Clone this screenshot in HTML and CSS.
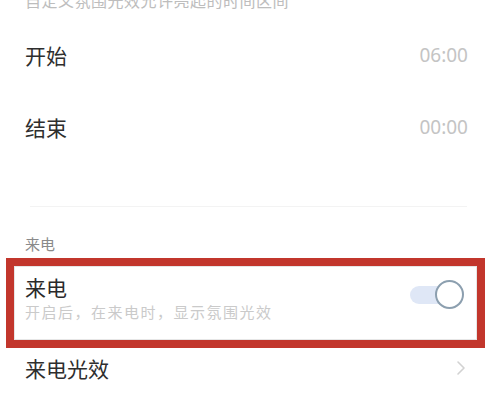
FILE: index.html
```html
<!DOCTYPE html>
<html lang="zh-CN">
<head>
<meta charset="utf-8">
<link rel="stylesheet" href="styles.css">
</head>
<body>
<div class="page">
  <div class="desc">自定义氛围光效允许亮起的时间区间</div>
  <div class="row time-row first">
    <span class="label">开始</span>
    <span class="value">06:00</span>
  </div>
  <div class="row time-row">
    <span class="label">结束</span>
    <span class="value">00:00</span>
  </div>
  <div class="divider"></div>
  <div class="section">来电</div>
  <div class="highlight">
    <div class="text">
      <div class="title">来电</div>
      <div class="sub">开启后，在来电时，显示氛围光效</div>
    </div>
    <div class="switch"><span class="knob"></span></div>
  </div>
  <div class="row link-row">
    <span class="label">来电光效</span>
    <svg class="chev" width="10" height="16" viewBox="0 0 10 16"><path d="M2 2 L8 8 L2 14" fill="none" stroke="#d2d2d2" stroke-width="1.6" stroke-linecap="round" stroke-linejoin="round"/></svg>
  </div>
</div>
</body>
</html>
```
FILE: styles.css
```css
html, body {
  margin: 0;
  padding: 0;
  background: #ffffff;
}
body {
  width: 487px;
  height: 403px;
  overflow: hidden;
  font-family: "Noto Sans CJK SC", "Noto Sans", sans-serif;
}
.page {
  display: flex;
  flex-direction: column;
}
.desc {
  margin-top: -10px;
  padding-left: 25px;
  font-size: 16px;
  line-height: 20px;
  color: #bdbdbd;
  letter-spacing: 0.5px;
}
.row {
  display: flex;
  align-items: center;
  justify-content: space-between;
  padding: 0 19px 0 25px;
}
.time-row {
  height: 72px;
}
.time-row.first {
  margin-top: 9px;
}
.label {
  font-size: 21px;
  color: #2e2e2e;
}
.value {
  font-family: "Noto Sans", Roboto, sans-serif;
  font-size: 19px;
  color: #c4c4c4;
}
.divider {
  height: 1px;
  background: #f3f3f3;
  margin: 43px 20px 0 30px;
}
.section {
  margin-top: 27px;
  padding-left: 25px;
  font-size: 15px;
  line-height: 20px;
  color: #8a8a8a;
}
.highlight {
  margin: 4px 2px 0 6px;
  border: 8px solid #c2362c;
  box-shadow: inset 0 0 0 1px #e6e6e6;
  padding: 8px 13px 17px 11px;
  display: flex;
  align-items: center;
  justify-content: space-between;
}
.title {
  font-size: 21px;
  line-height: 26px;
  color: #2a2a2a;
}
.sub {
  margin-top: 1px;
  font-size: 15px;
  line-height: 22px;
  color: #cacaca;
  letter-spacing: 1.5px;
}
.switch {
  position: relative;
  width: 54px;
  height: 30px;
  margin-top: -8px;
}
.switch::before {
  content: "";
  position: absolute;
  left: 0;
  top: 6px;
  width: 50px;
  height: 18px;
  border-radius: 9px;
  background: #dfe7f6;
}
.knob {
  position: absolute;
  right: 0;
  top: 0;
  width: 25px;
  height: 25px;
  border-radius: 50%;
  background: #ffffff;
  border: 2.5px solid #8c9faf;
}
.link-row {
  height: 40px;
  padding-right: 21px;
}
.chev {
  display: block;
}
```
